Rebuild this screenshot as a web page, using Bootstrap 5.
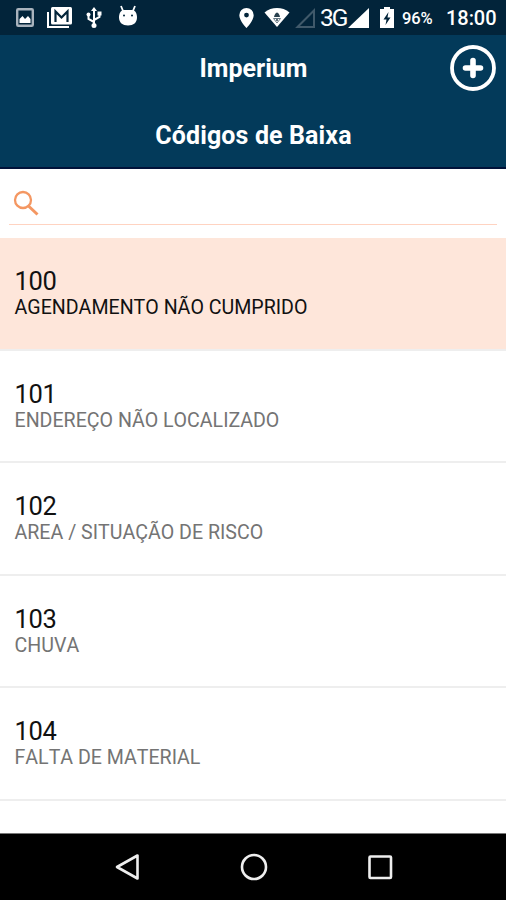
<!DOCTYPE html>
<html lang="pt-BR">
<head>
<meta charset="utf-8">
<meta name="viewport" content="width=device-width, initial-scale=1">
<title>Imperium – Códigos de Baixa</title>
<link href="https://cdn.jsdelivr.net/npm/bootstrap@5.3.0/dist/css/bootstrap.min.css" rel="stylesheet">
<style>
  body { font-family: Roboto, "Liberation Sans", sans-serif; }
  svg { display: block; flex: none; overflow: visible; }
  .screen { height: 900px; }
  .status-bar { height: 35px; background: #02243a; padding: 0 10px 0 16px; line-height: 35px; }
  .status-left { gap: 13px; }
  .icon-wifi { margin-left: 10px; }
  .icon-signal { margin-left: 5px; }
  .icon-battery { margin-left: 11px; }
  .status-net { font-size: 24.5px; letter-spacing: -1.9px; width: 26px; margin: 0 2px 0 5px; }
  .status-battery { font-size: 16.5px; font-weight: 500; letter-spacing: -.1px; width: 32px; margin: 2px 12px 0 8px; }
  .status-clock { font-size: 20px; font-weight: 500; width: 50px; letter-spacing: -.05px; margin-top: 1px; }
  .app-header { height: 134px; background: #033a5a; border-bottom: 2px solid #011239; }
  .title-row { height: 66px; display: grid; grid-template-columns: 1fr auto 1fr; padding: 0 9px; }
  .app-title { font-size: 25px; font-weight: 700; line-height: 66px; margin: 1px 0 0; padding-left: 1px; }
  .page-title { font-size: 25px; font-weight: 700; line-height: 69px; letter-spacing: .12px; margin: 0; padding-left: 1px; }
  .add-button { margin-bottom: 1px; }
  .search-area { height: 69px; padding: 0 9px; }
  .search-field { height: 56px; border-bottom: 1px solid #ffd3c1; padding: 13px 0 0 4px; }
  .search-field input { box-shadow: none !important; }
  .code-row { height: 112.5px; padding: 30px 15px 0 14.5px; border-color: #eee; border-width: 0 0 2px !important; color: #747474; }
  .code-row.selected { background: #fee6da; color: #111; }
  .code-number { font-size: 25.5px; line-height: 26px; letter-spacing: -.3px; color: #111; }
  .code-name { font-size: 19.6px; line-height: 27px; font-kerning: none; }
  .nav-bar { height: 67px; padding: 0 113px 0 114px; border-top: 1px solid #777; }
</style>
<script src="https://cdn.jsdelivr.net/npm/bootstrap@5.3.0/dist/js/bootstrap.bundle.min.js"></script>
</head>
<body class="bg-white">
<div class="screen d-flex flex-column overflow-hidden">
  <div class="status-bar d-flex align-items-center justify-content-between text-white flex-shrink-0">
    <div class="status-left d-flex align-items-center">
      <svg width="18" height="19" viewBox="0 0 18 19"><rect x="1.2" y="1.2" width="15.6" height="16.6" rx="1" fill="none" stroke="#a9b3bd" stroke-width="2.4"/><path d="M3.500 15v-4l3-3 2.500 3L12 8l2.500 3v4z" fill="#fff"/></svg>
      <svg width="26" height="21" viewBox="0 0 26 21"><path d="M1 5v15h21" fill="none" stroke="#fff" stroke-width="2"/><rect x="4" y="0" width="21" height="17.500" rx="1.500" fill="#fff"/><path d="M8.500 15V4.500l6 6 6-6V15" fill="none" stroke="#02243a" stroke-width="2.200"/></svg>
      <svg width="16" height="21" viewBox="0 0 16 21"><path d="M8 3v15M8 15l-5.500-3V8M8 13l5.500-3V6" fill="none" stroke="#fff" stroke-width="2"/><path d="M8 0l3 4H5z" fill="#fff"/><circle cx="8" cy="18.500" r="2.500" fill="#fff"/><circle cx="2.500" cy="7.500" r="2" fill="#fff"/><rect x="11.500" y="4.500" width="4" height="4" fill="#fff"/></svg>
      <svg class="ms-1 mb-1" width="18" height="21" viewBox="0 0 18 21"><path d="M2 1l2.500 6M16 1l-2.500 6" stroke="#fff" stroke-width="1.800"/><path d="M0 12.500C0 8 2 5 5 5h8c3 0 5 3 5 7.500 0 5-3.500 8-9 8s-9-3-9-8z" fill="#fff"/><circle cx="5" cy="10.500" r="1" fill="#02243a"/><circle cx="13" cy="10.500" r="1" fill="#02243a"/></svg>
    </div>
    <div class="d-flex align-items-center">
      <svg width="15" height="20" viewBox="0 0 15 20"><path fill-rule="evenodd" d="M7.500 0A7.200 7.200 0 0 0 .3 7.200C.3 12.500 7.500 20 7.500 20s7.200-7.500 7.200-12.800A7.200 7.200 0 0 0 7.500 0zm0 4.700a2.400 2.400 0 1 1 0 4.800 2.400 2.400 0 0 1 0-4.800z" fill="#fff"/></svg>
      <svg class="icon-wifi" width="26" height="19" viewBox="0 0 26 19"><path d="M.5 4.500C7.500-1.400 18.500-1.400 25.500 4.500L13 19z" fill="#fff"/><path d="M10 9c.5-2.500 1.500-4 3-4.500 1.500.5 2.500 2 3 4.500z" fill="#29414f"/><path d="M9.500 10.500h7l-3.500 4.500z" fill="none" stroke="#667985"/><circle cx="13" cy="12" r="1" fill="#29414f"/></svg>
      <svg class="icon-signal" width="20" height="20" viewBox="0 0 20 20"><path d="M2.500 19L19 2.500V19z" fill="none" stroke="#40596a" stroke-width="2"/></svg>
      <span class="status-net">3G</span>
      <svg width="21" height="20" viewBox="0 0 21 20"><path d="M0 20L21 0v20z" fill="#fff"/></svg>
      <svg class="icon-battery" width="14" height="21" viewBox="0 0 14 21"><path d="M4 0h6v2h4v19H0V2h4z" fill="#fff"/><path d="M8.500 5L3.500 12.500h3L5.500 18l5-7.500h-3z" fill="#02243a"/></svg>
      <span class="status-battery">96%</span>
      <span class="status-clock">18:00</span>
    </div>
  </div>

  <header class="app-header text-white flex-shrink-0">
    <div class="title-row align-items-center">
      <span></span>
      <h1 class="app-title">Imperium</h1>
      <button class="add-button btn p-0 border-0 ms-auto" type="button" aria-label="Adicionar">
        <svg width="48" height="48" viewBox="0 0 48 48" fill="none" stroke="#fff"><circle cx="24" cy="24" r="21" stroke-width="3.800"/><path d="M24 16.500v15M16.500 24h15" stroke-width="5.600" stroke-linecap="round"/></svg>
      </button>
    </div>
    <h2 class="page-title text-center">Códigos de Baixa</h2>
  </header>

  <div class="search-area flex-shrink-0">
    <div class="search-field d-flex align-items-center">
      <svg width="26" height="26" viewBox="0 0 26 26" fill="none" stroke="#f49762"><circle cx="10" cy="10" r="8" stroke-width="2.300"/><path d="M15.500 16l9 8.500" stroke-width="3"/></svg>
      <input class="form-control border-0 bg-transparent" type="text" aria-label="Buscar">
    </div>
  </div>

  <div class="list-group list-group-flush flex-grow-1 overflow-hidden">
    <div class="list-group-item code-row selected flex-shrink-0"><div class="code-number">100</div><div class="code-name">AGENDAMENTO NÃO CUMPRIDO</div></div>
    <div class="list-group-item code-row flex-shrink-0"><div class="code-number">101</div><div class="code-name">ENDEREÇO NÃO LOCALIZADO</div></div>
    <div class="list-group-item code-row flex-shrink-0"><div class="code-number">102</div><div class="code-name">AREA / SITUAÇÃO DE RISCO</div></div>
    <div class="list-group-item code-row flex-shrink-0"><div class="code-number">103</div><div class="code-name">CHUVA</div></div>
    <div class="list-group-item code-row flex-shrink-0"><div class="code-number">104</div><div class="code-name">FALTA DE MATERIAL</div></div>
  </div>

  <nav class="nav-bar bg-black d-flex align-items-center justify-content-between flex-shrink-0">
    <svg width="26" height="28" viewBox="0 0 26 28" fill="none" stroke="#eee" stroke-width="2.600"><path d="M23.500 2.500v23L3 14z" stroke-linejoin="round"/></svg>
    <svg width="28" height="28" viewBox="0 0 28 28" fill="none" stroke="#eee" stroke-width="2.600"><circle cx="14" cy="14" r="12"/></svg>
    <svg width="26" height="26" viewBox="0 0 26 26" fill="none" stroke="#eee" stroke-width="2.600"><rect x="2.500" y="2.500" width="21.500" height="21.500" rx="1"/></svg>
  </nav>
</div>
</body>
</html>
